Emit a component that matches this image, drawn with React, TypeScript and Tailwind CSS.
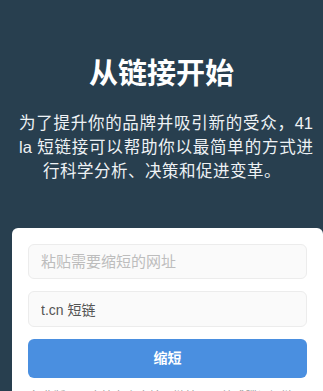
import { useState } from 'react'

export default function App() {
  const [url, setUrl] = useState('')
  const [domain, setDomain] = useState('t.cn 短链')

  return (
    <div className="min-h-screen bg-[#283f4f] pt-[56px] font-['Liberation_Sans','Noto_Sans_CJK_SC',sans-serif]">
      {/* Hero */}
      <h1 className="text-center text-[29px] leading-[36px] font-bold text-white">从链接开始</h1>
      <p className="mt-[19px] pl-[19px] pr-[10px] text-[16.5px] leading-[24px] text-[#eef2f5]">
        <span className="block [text-align-last:justify]">为了提升你的品牌并吸引新的受众，41</span>
        <span className="block [text-align-last:justify]">la 短链接可以帮助你以最简单的方式进</span>
        <span className="block text-center tracking-[0.5px] pr-[8px]">行科学分析、决策和促进变革。</span>
      </p>

      {/* Form card */}
      <div className="mt-[45px] ml-3 rounded-t-md bg-white px-4 pt-4 pb-6">
        <input
          value={url}
          onChange={e => setUrl(e.target.value)}
          placeholder="粘贴需要缩短的网址"
          className="block w-full h-[35px] rounded-md border border-[#ececec] bg-[#fafafa] px-3 text-[15px] text-[#555] placeholder:text-[#bdbdbd] outline-none"
        />
        <input
          value={domain}
          onChange={e => setDomain(e.target.value)}
          className="mt-3 block w-full h-[36px] rounded-md border border-[#ececec] bg-[#fafafa] px-3 text-[14px] text-[#555] outline-none"
        />
        <button className="mt-3 w-full h-[39px] rounded-md bg-[#4a8fe0] text-[14px] font-bold text-white">
          缩短
        </button>
        <p className="mt-[10px] text-center text-[12px] leading-[18px] text-[#999]">
          免费版，可直接在上方输入链接，压缩成腾讯短链，也可以选择其他域名后缀生成短链接。
        </p>
      </div>
    </div>
  )
}
